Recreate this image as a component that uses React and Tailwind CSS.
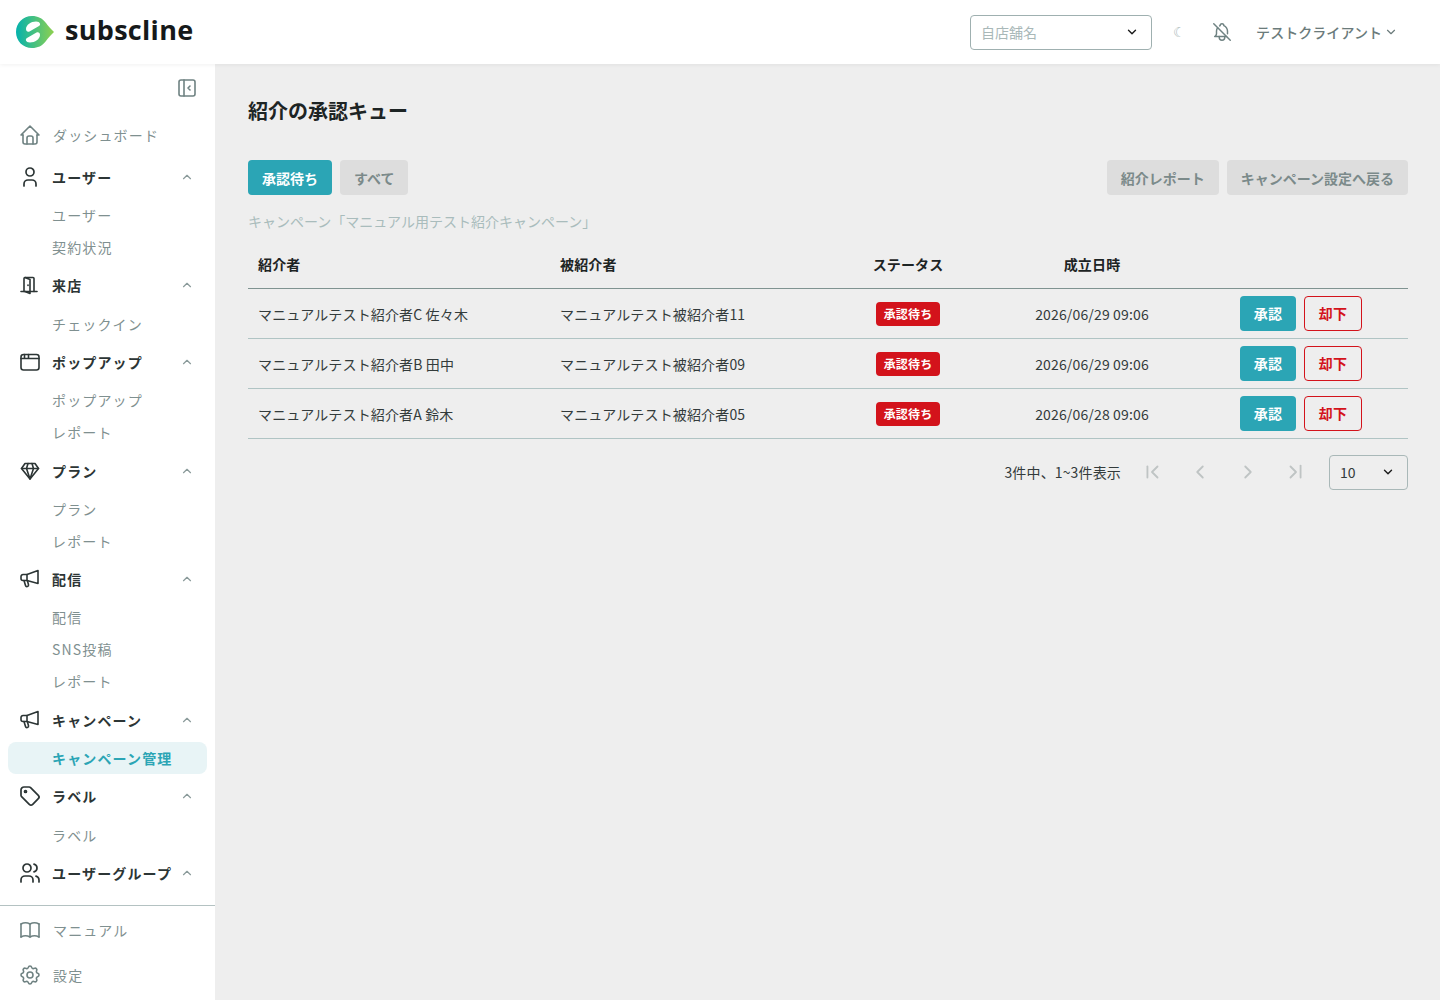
import {
  TbHome, TbUser, TbTag, TbUsers, TbBook, TbSettings,
  TbBellOff, TbLayoutSidebarLeftCollapse, TbChevronUp, TbChevronDown, TbChevronLeft, TbChevronRight,
  TbChevronLeftPipe, TbChevronRightPipe,
} from 'react-icons/tb';

// icons the package doesn't have in this shape
const DrawnIcon = ({ children }) => (
  <svg width="22" height="22" viewBox="0 0 22 22" fill="none" stroke="currentColor" strokeWidth="1.6" strokeLinecap="round" strokeLinejoin="round" className="text-[#2c3535] shrink-0">
    {children}
  </svg>
);

const DoorIcon = () => (
  <DrawnIcon>
    <path d="M2 17.5h16" />
    <path d="M5 17.5V4.5a1 1 0 0 1 1-1h8a1 1 0 0 1 1 1v13" />
    <path d="M6 3.5l5 2v14l-5-2" />
    <path d="M9 11v.5" />
  </DrawnIcon>
);

const WindowIcon = () => (
  <DrawnIcon>
    <rect x="2" y="3.5" width="18" height="15.5" rx="2.5" />
    <path d="M2 7.5h18M5.5 3.5v4M9.5 3.5v4" />
  </DrawnIcon>
);

const DiamondIcon = () => (
  <DrawnIcon>
    <path d="M6 3.5h10l3.5 5L11 19 2.5 8.5Z" />
    <path d="M2.5 8.5h17M7.5 8.5 11 19l3.5-10.5M7.5 8.5 9 3.5M14.5 8.5 13 3.5" />
  </DrawnIcon>
);

const MegaphoneIcon = () => (
  <DrawnIcon>
    <path d="M4 6.5H8L19 2.5V15.5L8 12.5H4a2 2 0 0 1-2-2V8.5a2 2 0 0 1 2-2Z" />
    <path d="M8 6.5v6" />
    <path d="M5 12.5l1.5 5a1.5 1.5 0 0 0 3-.8L8.5 13" />
  </DrawnIcon>
);

const navGroups = [
  { label: 'ユーザー', icon: <TbUser size={24} strokeWidth={1.7} className="text-[#2c3535] shrink-0 -mx-px" />, items: ['ユーザー', '契約状況'] },
  { label: '来店', icon: <DoorIcon />, items: ['チェックイン'] },
  { label: 'ポップアップ', icon: <WindowIcon />, items: ['ポップアップ', 'レポート'] },
  { label: 'プラン', icon: <DiamondIcon />, items: ['プラン', 'レポート'] },
  { label: '配信', icon: <MegaphoneIcon />, items: ['配信', 'SNS投稿', 'レポート'] },
  { label: 'キャンペーン', icon: <MegaphoneIcon />, items: ['キャンペーン管理'] },
  { label: 'ラベル', icon: <TbTag size={24} strokeWidth={1.7} className="text-[#2c3535] shrink-0 -mx-px" />, items: ['ラベル'] },
  { label: 'ユーザーグループ', icon: <TbUsers size={24} strokeWidth={1.7} className="text-[#2c3535] shrink-0 -mx-px" />, items: [] },
];

const rows = [
  { referrer: 'マニュアルテスト紹介者C 佐々木', referee: 'マニュアルテスト被紹介者11', date: '2026/06/29 09:06' },
  { referrer: 'マニュアルテスト紹介者B 田中', referee: 'マニュアルテスト被紹介者09', date: '2026/06/29 09:06' },
  { referrer: 'マニュアルテスト紹介者A 鈴木', referee: 'マニュアルテスト被紹介者05', date: '2026/06/28 09:06' },
];

const Logo = () => (
  <svg width="38" height="32" viewBox="0 0 38 32" className="shrink-0">
    <defs>
      <linearGradient id="logoGrad" x1="0" y1="0" x2="1" y2="0">
        <stop offset="0" stopColor="#05b2ad" />
        <stop offset="1" stopColor="#8ed04f" />
      </linearGradient>
    </defs>
    <path d="M16 0C22 0 26 2 30 7C32 10 35 13 38 16C35 19 32 22 30 25C26 30 22 32 16 32C7 32 0 25 0 16C0 7 7 0 16 0Z" fill="url(#logoGrad)" />
    <path d="M20 5.5C15 5.5 10 9 10 13C10 15 11.5 16.2 13.5 15.4L23 10C25 9 24.5 5.5 20 5.5Z" fill="#fff" />
    <path d="M14 26.5C19 26.5 24 23 24 19C24 17 22.5 15.8 20.5 16.6L11 22C9 23 9.5 26.5 14 26.5Z" fill="#fff" />
  </svg>
);

const NavGroup = ({ group }) => (
  <div>
    <div className="h-[44.6px] flex items-center pl-[19px] pr-[21px]">
      {group.icon}
      <span className="ml-[11px] flex-1 text-sm font-bold tracking-[1.15px] text-[#2c3535] whitespace-nowrap">{group.label}</span>
      <TbChevronUp size={14} className="text-[#8a9a9a] shrink-0" />
    </div>
    {group.items.map((item) =>
      item === 'キャンペーン管理' ? (
        <div key={item} className="h-8 mx-2 flex items-center pl-11 rounded-lg bg-[#e8f4f6] text-sm font-bold tracking-[1.15px] text-[#2ba5b5]">
          {item}
        </div>
      ) : (
        <div key={item} className="h-8 flex items-center pl-[52px] text-sm tracking-[1.15px] text-[#7f9090]">
          {item}
        </div>
      )
    )}
  </div>
);

const Sidebar = () => (
  <aside className="w-[215px] shrink-0 bg-white flex flex-col">
    <div className="h-[50.5px] flex items-start justify-end pr-4 pt-3">
      <TbLayoutSidebarLeftCollapse size={24} strokeWidth={1.6} className="text-[#6f8282]" />
    </div>
    <div className="h-10 flex items-center pl-[19px]">
      <TbHome size={24} strokeWidth={1.6} className="text-[#6f8282] -mx-px" />
      <span className="ml-[12px] text-sm tracking-[1.15px] text-[#7f9090]">ダッシュボード</span>
    </div>
    <nav className="flex-1">
      {navGroups.map((group) => (
        <NavGroup key={group.label} group={group} />
      ))}
    </nav>
    <div className="border-t border-[#b4c2c2] pt-px pb-[3px]">
      <div className="h-[45px] flex items-center pl-[19px]">
        <TbBook size={24} strokeWidth={1.6} className="text-[#6f8282] -mx-px" />
        <span className="ml-[12px] text-sm tracking-[1.15px] text-[#7f9090]">マニュアル</span>
      </div>
      <div className="h-[45px] flex items-center pl-[19px]">
        <TbSettings size={24} strokeWidth={1.6} className="text-[#6f8282] -mx-px" />
        <span className="ml-[12px] text-sm tracking-[1.15px] text-[#7f9090]">設定</span>
      </div>
    </div>
  </aside>
);

const Header = () => (
  <header className="h-16 shrink-0 bg-white flex items-center pl-4 pr-[42px] shadow-[0_1px_4px_rgba(0,0,0,0.06)] relative z-10">
    <Logo />
    <span className="ml-[11px] mb-1 font-['Open_Sans',sans-serif] text-[27px] font-bold tracking-[0.3px] text-[#16191a]">subscline</span>
    <div className="ml-auto flex items-center">
      <div className="w-[182px] h-[35px] flex items-center justify-between pl-[10px] pr-3 rounded border border-[#9fb0b0] text-sm text-[#a9b8b8]">
        <span>自店舗名</span>
        <TbChevronDown size={14} strokeWidth={2.4} className="text-[#1a1a1a]" />
      </div>
      <span className="ml-[21px] w-[12px] font-['DejaVu_Sans',sans-serif] text-sm text-[#a9b8b8]">☾</span>
      <TbBellOff size={22} strokeWidth={1.6} className="ml-[26px] text-[#6f8282]" />
      <span className="ml-[23px] text-sm font-medium tracking-[0.05px] text-[#6b7b7b]">テストクライアント</span>
      <TbChevronDown size={14} className="ml-[2px] text-[#6b7b7b]" />
    </div>
  </header>
);

const SoftButton = ({ children }) => (
  <button className="h-[35px] px-[14px] rounded bg-[#dddddd] text-sm font-bold text-[#7b8a8a]">{children}</button>
);

const Pagination = () => (
  <div className="mt-4 flex items-center justify-end">
    <span className="text-sm tracking-[0.15px] text-[#333b3b] mr-[7px]">3件中、1~3件表示</span>
    {[TbChevronLeftPipe, TbChevronLeft, TbChevronRight, TbChevronRightPipe].map((Icon, i) => (
      <div key={i} className="w-12 h-[35px] flex items-center justify-center">
        <Icon size={22} strokeWidth={2} className="text-[#bfc4c4]" />
      </div>
    ))}
    <div className="ml-[9px] w-[79px] h-[35px] flex items-center justify-between pl-[10px] pr-3 rounded border border-[#a9b8b8] text-sm text-[#333b3b]">
      <span>10</span>
      <TbChevronDown size={14} strokeWidth={2.4} className="text-[#1a1a1a]" />
    </div>
  </div>
);

const QueueTable = () => (
  <table className="w-[1160px] table-fixed border-collapse text-sm tracking-[0.15px] mt-[6px]">
    <colgroup>
      <col className="w-[302px]" />
      <col className="w-[312px]" />
      <col className="w-[92px]" />
      <col className="w-[276px]" />
      <col className="w-[178px]" />
    </colgroup>
    <thead>
      <tr className="h-[50px] border-b border-[#7f9391] text-[#1d2424]">
        <th className="px-[10px] pt-[2px] text-left font-bold">紹介者</th>
        <th className="px-[10px] pt-[2px] text-left font-bold">被紹介者</th>
        <th className="pt-[2px] text-center font-bold">ステータス</th>
        <th className="pt-[2px] text-center font-bold">成立日時</th>
        <th />
      </tr>
    </thead>
    <tbody>
      {rows.map((row) => (
        <tr key={row.referee} className="h-[50px] border-b border-[#b0c4c4] text-[#333b3b]">
          <td className="px-[10px] pt-px">{row.referrer}</td>
          <td className="px-[10px] pt-px">{row.referee}</td>
          <td className="pt-px">
            <span className="flex mx-auto w-16 h-6 items-center justify-center rounded bg-[#d3131b] text-xs font-bold text-white">承認待ち</span>
          </td>
          <td className="pt-px text-center">{row.date}</td>
          <td className="pl-[10px]">
            <div className="flex gap-2">
              <button className="w-14 h-[35px] rounded bg-[#2ba5b5] font-bold text-white">承認</button>
              <button className="w-[58px] h-[35px] rounded border border-[#d3131b] font-bold text-[#d3131b]">却下</button>
            </div>
          </td>
        </tr>
      ))}
    </tbody>
  </table>
);

export default function App() {
  return (
    <div className="h-screen overflow-hidden flex flex-col bg-[#eeeeee] font-['Noto_Sans_CJK_JP','Noto_Sans',sans-serif]">
      <Header />
      <div className="flex-1 min-h-0 flex">
        <Sidebar />
        <main className="flex-1 pl-[33px] pr-8 pt-[32px]">
          <h1 className="text-xl leading-[30px] font-bold text-[#1d2424]">紹介の承認キュー</h1>
          <div className="mt-[34px] flex items-center gap-2">
            <button className="h-[35px] px-[14px] rounded bg-[#2ba5b5] text-sm font-bold text-white">承認待ち</button>
            <SoftButton>すべて</SoftButton>
            <div className="ml-auto flex gap-2">
              <SoftButton>紹介レポート</SoftButton>
              <SoftButton>キャンペーン設定へ戻る</SoftButton>
            </div>
          </div>
          <p className="mt-[16px] text-sm leading-[21px] text-[#a9bcbc]">キャンペーン「マニュアル用テスト紹介キャンペーン」</p>
          <QueueTable />
          <Pagination />
        </main>
      </div>
    </div>
  );
}
